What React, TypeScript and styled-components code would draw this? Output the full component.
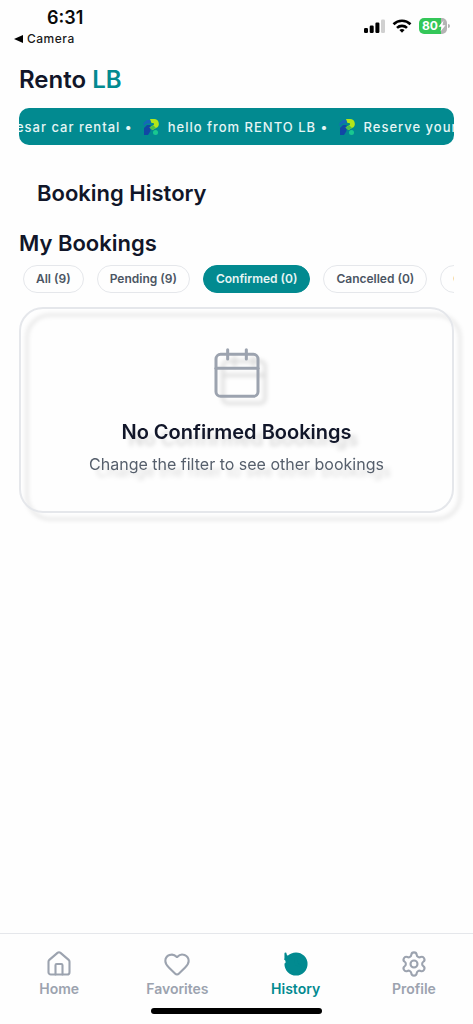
import React, { useState } from 'react';
import styled, { createGlobalStyle } from 'styled-components';
import { Calendar, Heart, History, House, Settings } from 'lucide-react';

const teal = '#028a90';
const ink = '#111629';
const muted = '#9ca3af';
const line = '#e5e7eb';

const GlobalStyle = createGlobalStyle`
  *, *::before, *::after { box-sizing: border-box; }
  body {
    margin: 0;
    background: #fefefe;
    color: ${ink};
    font-family: Inter, "Liberation Sans", sans-serif;
  }
  h1, h2, h3, p { margin: 0; }
  button { font: inherit; cursor: pointer; }
`;

const Screen = styled.div`
  display: flex;
  flex-direction: column;
  min-height: 100vh;
`;

const StatusBar = styled.header`
  display: flex;
  justify-content: space-between;
  align-items: flex-start;
  padding: 7px 26px 0 14px;
`;

const Clock = styled.time`
  display: block;
  padding-left: 33px;
  font-size: 18px;
  line-height: 22px;
  font-weight: 600;
  color: #0a0a0a;
`;

const BackLink = styled.a`
  display: flex;
  align-items: center;
  gap: 4px;
  padding-top: 2px;
  font-size: 12px;
  line-height: 16px;
  font-weight: 500;
  letter-spacing: 0.5px;
  color: #1a1a1a;
  text-decoration: none;
`;

const StatusIcons = styled.div`
  display: flex;
  align-items: center;
  gap: 7px;
  padding-top: 11px;
`;

const Battery = styled.div`
  position: relative;
  display: flex;
  align-items: center;
  width: 28px;
  height: 16px;
  padding-left: 3px;
  border-radius: 5px;
  background: linear-gradient(90deg, #34c759 80%, #b4b4b4 80%);
  color: #fff;
  font-size: 12px;
  line-height: 16px;
  font-weight: 700;

  &::after {
    content: '';
    position: absolute;
    right: -3px;
    top: 6px;
    width: 2px;
    height: 4px;
    border-radius: 0 2px 2px 0;
    background: #b4b4b4;
  }
`;

const Main = styled.main`
  flex: 1;
  padding: 15px 19px 0;
`;

const Brand = styled.h1`
  font-size: 24px;
  line-height: 36px;
  font-weight: 600;

  span { color: ${teal}; }
`;

const Ticker = styled.div`
  display: flex;
  justify-content: center;
  height: 37px;
  margin-top: 10px;
  overflow: hidden;
  border-radius: 10px;
  background: ${teal};
`;

const TickerTrack = styled.div`
  display: flex;
  flex-shrink: 0;
  align-items: center;
  padding-left: 9px;
  color: #e6f5f5;
  font-size: 13px;
  line-height: 20px;
  font-weight: 500;
  letter-spacing: 1px;
  white-space: nowrap;

  svg { margin: 0 8px 0 9px; }
`;

const PageTitle = styled.h2`
  margin-top: 32px;
  padding-left: 18px;
  font-size: 22px;
  line-height: 32px;
  font-weight: 600;
`;

const SectionTitle = styled.h2`
  margin-top: 18px;
  font-size: 22px;
  line-height: 32px;
  font-weight: 600;
`;

const Filters = styled.div`
  display: flex;
  gap: 13px;
  margin-top: 6px;
  padding-left: 4px;
  overflow: hidden;
`;

const FilterButton = styled.button<{ $active: boolean }>`
  flex-shrink: 0;
  height: 28px;
  padding: 0 12px;
  border: 1px solid ${({ $active }) => ($active ? teal : line)};
  border-radius: 14px;
  background: ${({ $active }) => ($active ? teal : 'transparent')};
  color: ${({ $active }) => ($active ? '#e6f5f5' : '#4b5563')};
  font-size: 12px;
  line-height: 16px;
  font-weight: 600;
`;

const EmptyCard = styled.section`
  display: flex;
  flex-direction: column;
  align-items: center;
  margin-top: 14px;
  padding: 36px 16px 34px;
  border: 2px solid #e5e7eb;
  border-radius: 24px;
  text-align: center;
  filter: drop-shadow(7px 7px 2px rgba(0, 0, 0, 0.14));
`;

const EmptyTitle = styled.h3`
  margin-top: 15px;
  font-size: 20px;
  line-height: 32px;
  font-weight: 600;
`;

const EmptyText = styled.p`
  margin-top: 3px;
  color: #565f6c;
  font-size: 16px;
  line-height: 26px;
`;

const TabBar = styled.nav`
  display: grid;
  grid-template-columns: repeat(4, 1fr);
  padding-top: 16px;
  border-top: 1px solid ${line};
`;

const TabLink = styled.a<{ $active?: boolean }>`
  display: flex;
  flex-direction: column;
  align-items: center;
  gap: 1px;
  color: ${({ $active }) => ($active ? teal : muted)};
  font-size: 14px;
  line-height: 20px;
  font-weight: 600;
  text-decoration: none;

  svg { fill: ${({ $active }) => ($active ? teal : 'none')}; }
`;

const HomeIndicator = styled.div`
  align-self: center;
  width: 36%;
  height: 6px;
  margin: 9px 0 10px;
  border-radius: 3px;
  background: #000;
`;

const RentoMark = () => (
  <svg width="18" height="18" viewBox="0 0 18 18" aria-hidden="true">
    <path d="M1.500 5 5 2H10L8 5.500H4.500L1.500 8Z" fill="#1668b8" />
    <path d="M2 10 5 7H8.500V13L6 17H2Z" fill="#1147a5" />
    <path d="M8 1h4a4.700 4.700 0 0 1 2 9L10.500 12 7.500 9.500l3.800-2.200a1.200 1.200 0 0 0-.300-2.300H9.500Z" fill="#b4e61a" />
    <path d="M7.500 9.500 10.500 12 14 10 11.500 7.500Z" fill="#4cc04a" />
    <circle cx="13.500" cy="14.500" r="2.500" fill="#19c890" />
  </svg>
);

const SignalIcon = () => (
  <svg width="21" height="14" viewBox="0 0 21 14" aria-hidden="true">
    <rect x="0" y="9" width="4" height="5" rx="1.200" />
    <rect x="5.700" y="6.500" width="4" height="7.500" rx="1.200" />
    <rect x="11.400" y="3.500" width="4" height="10.500" rx="1.200" />
    <rect x="17" y="0.500" width="4" height="13.500" rx="1.200" fill="#d0d0d0" />
  </svg>
);

const WifiIcon = () => (
  <svg width="20" height="14" viewBox="0 0 20 14" fill="none" stroke="#000" strokeWidth="2.600" aria-hidden="true">
    <path d="M1.500 5.200a12.200 12.200 0 0 1 17 0" />
    <path d="M5 8.900a7.200 7.200 0 0 1 10 0" />
    <path d="M10 13.700 7.400 11.100a3.800 3.800 0 0 1 5.200 0Z" fill="#000" stroke="none" />
  </svg>
);

const BoltIcon = () => (
  <svg width="8" height="12" viewBox="0 0 8 12" aria-hidden="true">
    <path d="M5.500 0.500 0.500 6.800h3L2.500 11.500l5-6.300h-3Z" fill="#fff" />
  </svg>
);

const filters = ['All (9)', 'Pending (9)', 'Confirmed (0)', 'Cancelled (0)', 'Completed (0)'];

const tabs = [
  { label: 'Home', Icon: House },
  { label: 'Favorites', Icon: Heart },
  { label: 'History', Icon: History },
  { label: 'Profile', Icon: Settings },
];

export default function App() {
  const [selected, setSelected] = useState('Confirmed (0)');

  return (
    <Screen>
      <GlobalStyle />
      <StatusBar>
        <div>
          <Clock>6:31</Clock>
          <BackLink href="#camera">
            <svg width="9" height="8" viewBox="0 0 9 8" aria-hidden="true">
              <path d="M0 4 9 0v8Z" />
            </svg>
            Camera
          </BackLink>
        </div>
        <StatusIcons>
          <SignalIcon />
          <WifiIcon />
          <Battery>
            80
            <BoltIcon />
          </Battery>
        </StatusIcons>
      </StatusBar>

      <Main>
        <Brand>
          Rento <span>LB</span>
        </Brand>
        <Ticker>
          <TickerTrack>
            Caesar car rental •
            <RentoMark />
            hello from RENTO LB •
            <RentoMark />
            Reserve your car
          </TickerTrack>
        </Ticker>
        <PageTitle>Booking History</PageTitle>
        <SectionTitle>My Bookings</SectionTitle>
        <Filters>
          {filters.map((label) => (
            <FilterButton
              key={label}
              type="button"
              $active={label === selected}
              aria-pressed={label === selected}
              onClick={() => setSelected(label)}
            >
              {label}
            </FilterButton>
          ))}
        </Filters>
        <EmptyCard>
          <Calendar size={56} strokeWidth={1.3} color={muted} aria-hidden="true" />
          <EmptyTitle>No Confirmed Bookings</EmptyTitle>
          <EmptyText>Change the filter to see other bookings</EmptyText>
        </EmptyCard>
      </Main>

      <TabBar>
        {tabs.map(({ label, Icon }) => (
          <TabLink key={label} href={`#${label.toLowerCase()}`} $active={label === 'History'}>
            <Icon size={28} strokeWidth={1.8} aria-hidden="true" />
            {label}
          </TabLink>
        ))}
      </TabBar>
      <HomeIndicator />
    </Screen>
  );
}
